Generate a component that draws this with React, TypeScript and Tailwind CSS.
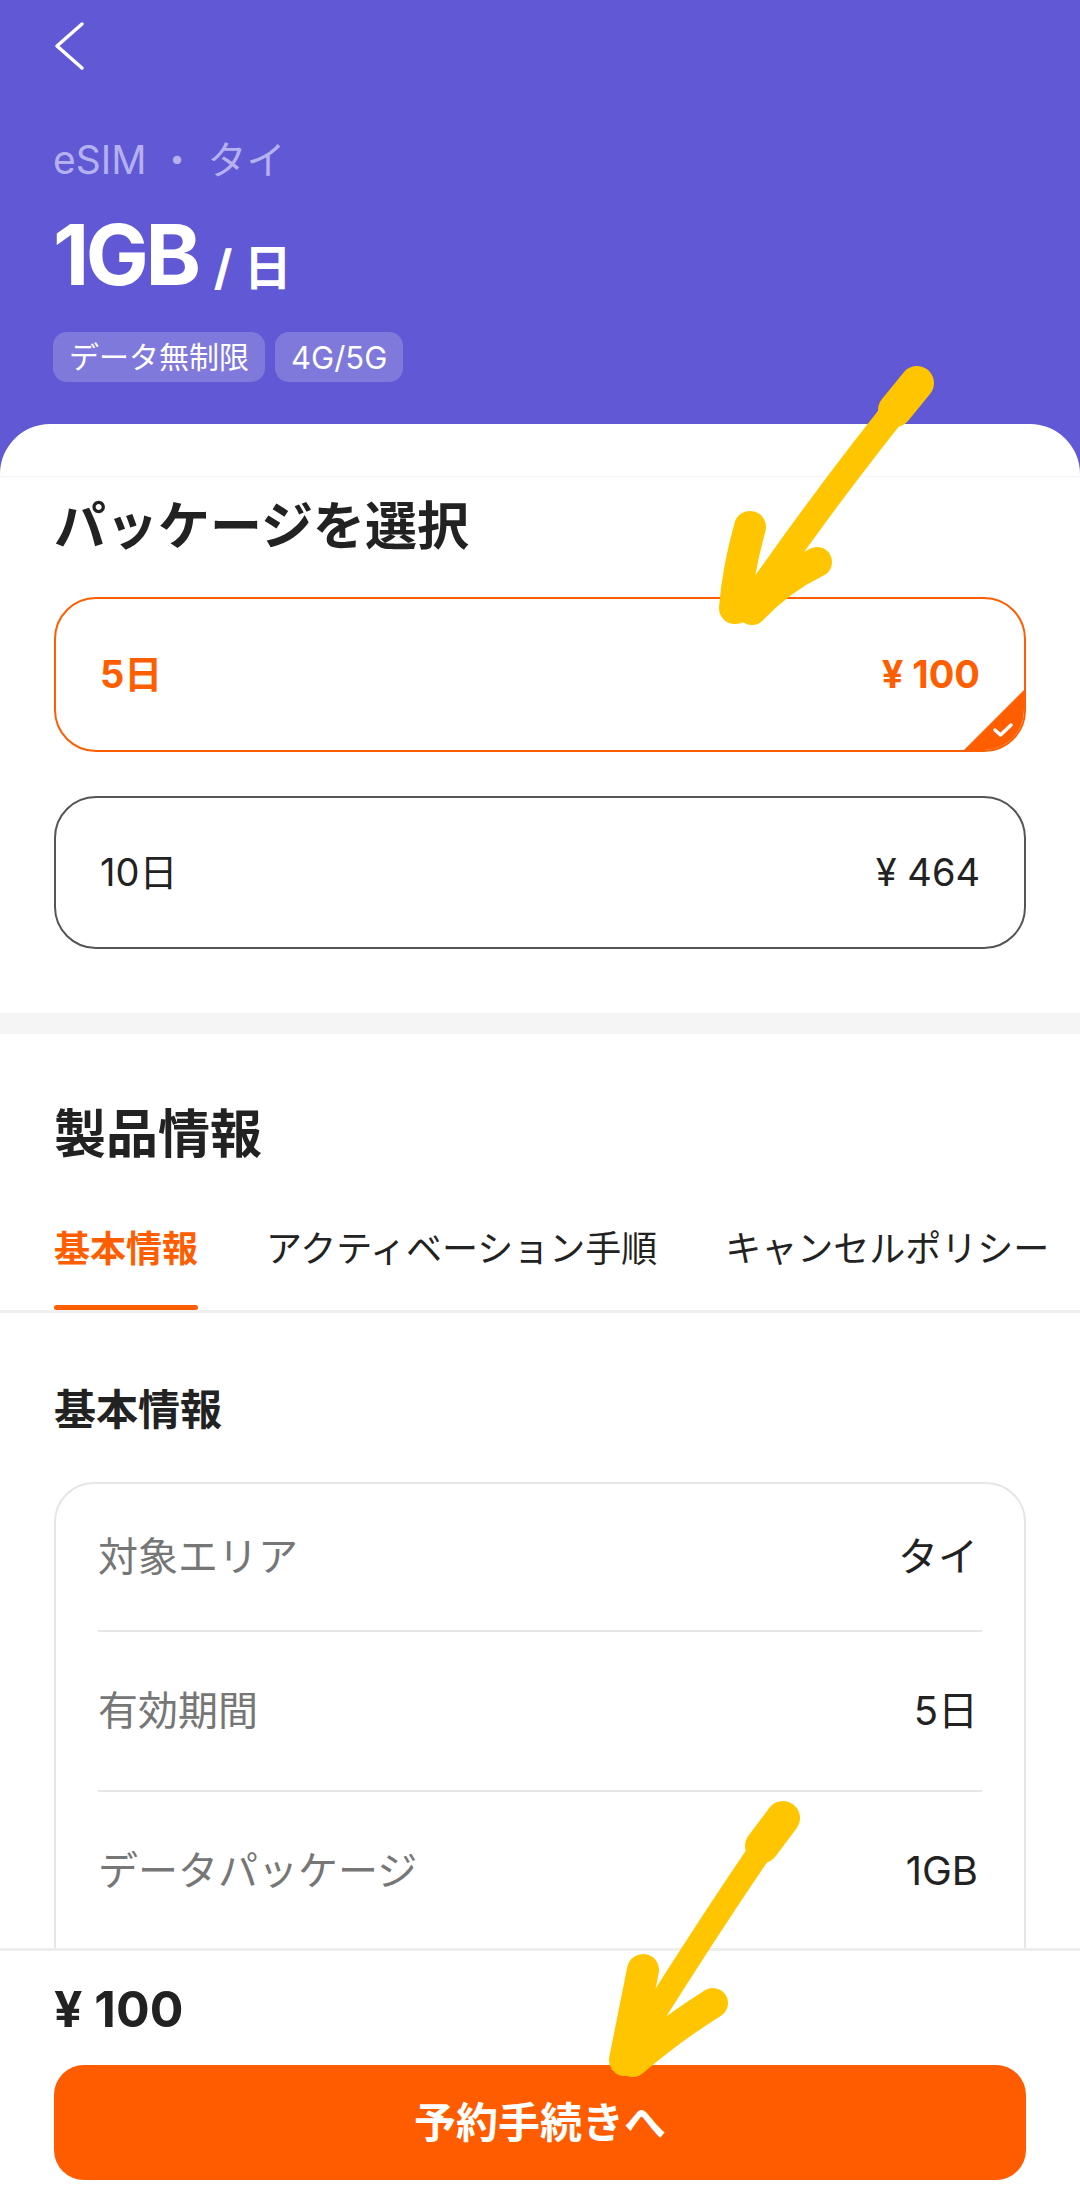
import React from "react";

const rows = [
  { label: "対象エリア", value: "タイ" },
  { label: "有効期間", value: "5日" },
  { label: "データパッケージ", value: "1GB" },
];

const tabs = ["基本情報", "アクティベーション手順", "キャンセルポリシー"];

export default function App() {
  return (
    <div className="relative flex h-[2187px] w-[1080px] flex-col overflow-hidden bg-white font-['Inter','Noto_Sans_CJK_JP',sans-serif] text-[#222222]">
      {/* header */}
      <div className="shrink-0 bg-[#6158D6]">
        <div className="px-[53px] pt-[21px] pb-[42px]">
          <svg width="34" height="50" viewBox="0 0 34 50" fill="none">
            <path
              d="M29 3 L4 25 L29 47"
              stroke="white"
              strokeWidth="3.5"
              strokeLinecap="round"
              strokeLinejoin="round"
            />
          </svg>
          <div className="mt-[66px] h-[46px] text-[39px] leading-[46px] text-[#B5B1EE]">
            eSIM ・ タイ
          </div>
          <div className="mt-[31px] flex h-[82px] items-baseline text-white">
            <span className="text-[84px] font-bold leading-[82px] tracking-[-0.04em]">
              1GB
            </span>
            <span className="ml-[16px] text-[48px] font-bold">/ 日</span>
          </div>
          <div className="mt-[36px] flex gap-[10px]">
            <span className="flex h-[50px] items-center rounded-[14px] bg-[#8079DC] px-[16px] text-[30px] leading-none text-white">
              データ無制限
            </span>
            <span className="flex h-[50px] items-center rounded-[14px] bg-[#8079DC] px-[16px] text-[31px] leading-none text-white">
              4G/5G
            </span>
          </div>
        </div>
        <div className="h-[52px] rounded-t-[50px] bg-white" />
        <div className="h-px bg-[#F2F2F8]" />
      </div>

      {/* scroll content */}
      <div className="min-h-0 flex-1 overflow-hidden">
        <div className="px-[54px] pt-[19px]">
          <h2 className="text-[52px] font-bold leading-[62px]">パッケージを選択</h2>
          <div className="relative mt-[39px] flex h-[155px] items-center justify-between overflow-hidden rounded-[42px] border-2 border-[#FF5E00] px-[44px] text-[38px] font-bold text-[#FF5E00]">
            <span>5日</span>
            <span>¥ 100</span>
            <div className="absolute right-0 bottom-0 flex h-[60px] w-[60px] items-end justify-end bg-[#FF5E00] pr-[10px] pb-[12px] [clip-path:polygon(100%_0,100%_100%,0_100%)]">
              <svg width="22" height="16" viewBox="0 0 22 16" fill="none">
                <path
                  d="M3 8 L8.5 13 L19 3"
                  stroke="white"
                  strokeWidth="3.5"
                  strokeLinecap="round"
                  strokeLinejoin="round"
                />
              </svg>
            </div>
          </div>
          <div className="mt-[44px] flex h-[153px] items-center justify-between rounded-[42px] border-2 border-[#555555] px-[44px] text-[38px]">
            <span>10日</span>
            <span>¥ 464</span>
          </div>
        </div>

        <div className="mt-[64px] h-[21px] bg-[#F5F5F5]" />

        <h2 className="mt-[70px] px-[54px] text-[52px] font-bold leading-[62px]">製品情報</h2>

        <div className="mt-[62px] flex gap-[68px] overflow-hidden border-b-[3px] border-[#EFEFEF] px-[54px]">
          {tabs.map((t, i) => (
            <div key={t} className="flex shrink-0 flex-col">
              <span
                className={
                  i === 0
                    ? "text-[36px] font-bold leading-[43px] text-[#FF5E00]"
                    : "text-[36px] leading-[43px] text-[#222222]"
                }
              >
                {t}
              </span>
              <div
                className={
                  i === 0
                    ? "mt-[34px] h-[5px] rounded-full bg-[#FF5E00]"
                    : "mt-[34px] h-[5px]"
                }
              />
            </div>
          ))}
        </div>

        <div className="px-[54px]">
          <h3 className="mt-[72px] text-[42px] font-bold leading-[50px]">基本情報</h3>
          <div className="mt-[47px] h-[600px] rounded-[40px] border-2 border-[#E6E6E6] px-[42px]">
            {rows.map((r, i) => (
              <div key={r.label}>
                {i > 0 && <div className="h-[2px] bg-[#E6E6E6]" />}
                <div
                  className={
                    i === 0
                      ? "flex h-[146px] items-center justify-between"
                      : "flex h-[158px] items-center justify-between"
                  }
                >
                  <span className="text-[40px] text-[#767676]">{r.label}</span>
                  <span className="pr-[4px] text-[40px] text-[#222222]">{r.value}</span>
                </div>
              </div>
            ))}
          </div>
        </div>
      </div>

      {/* bottom bar */}
      <div className="h-[239px] shrink-0 border-t-[3px] border-[#EEEEEE] bg-white px-[54px]">
        <div className="mt-[28px] text-[50px] font-bold leading-[60px]">¥ 100</div>
        <button className="mt-[26px] flex h-[115px] w-full items-center justify-center rounded-[30px] bg-[#FF5C00] text-[42px] font-bold text-white">
          予約手続きへ
        </button>
      </div>

      {/* hand-drawn annotation arrows */}
      <svg
        className="pointer-events-none absolute top-0 left-0"
        width="1080"
        height="2187"
        viewBox="0 0 1080 2187"
        fill="none"
      >
        <g stroke="#FFC600" strokeLinecap="round" strokeLinejoin="round">
          <path d="M917 383 Q 830 490 747 610" strokeWidth="26" />
          <path d="M917 383 L 895 410" strokeWidth="34" />
          <path d="M750 527 Q 738 570 735 608" strokeWidth="32" />
          <path d="M817 562 Q 780 580 752 610" strokeWidth="30" />

          <path d="M783 1818 Q 715 1915 623 2063" strokeWidth="24" />
          <path d="M783 1818 L 762 1846" strokeWidth="34" />
          <path d="M643 1970 L 625 2060" strokeWidth="32" />
          <path d="M713 2003 Q 670 2030 633 2062" strokeWidth="30" />
        </g>
      </svg>
    </div>
  );
}
